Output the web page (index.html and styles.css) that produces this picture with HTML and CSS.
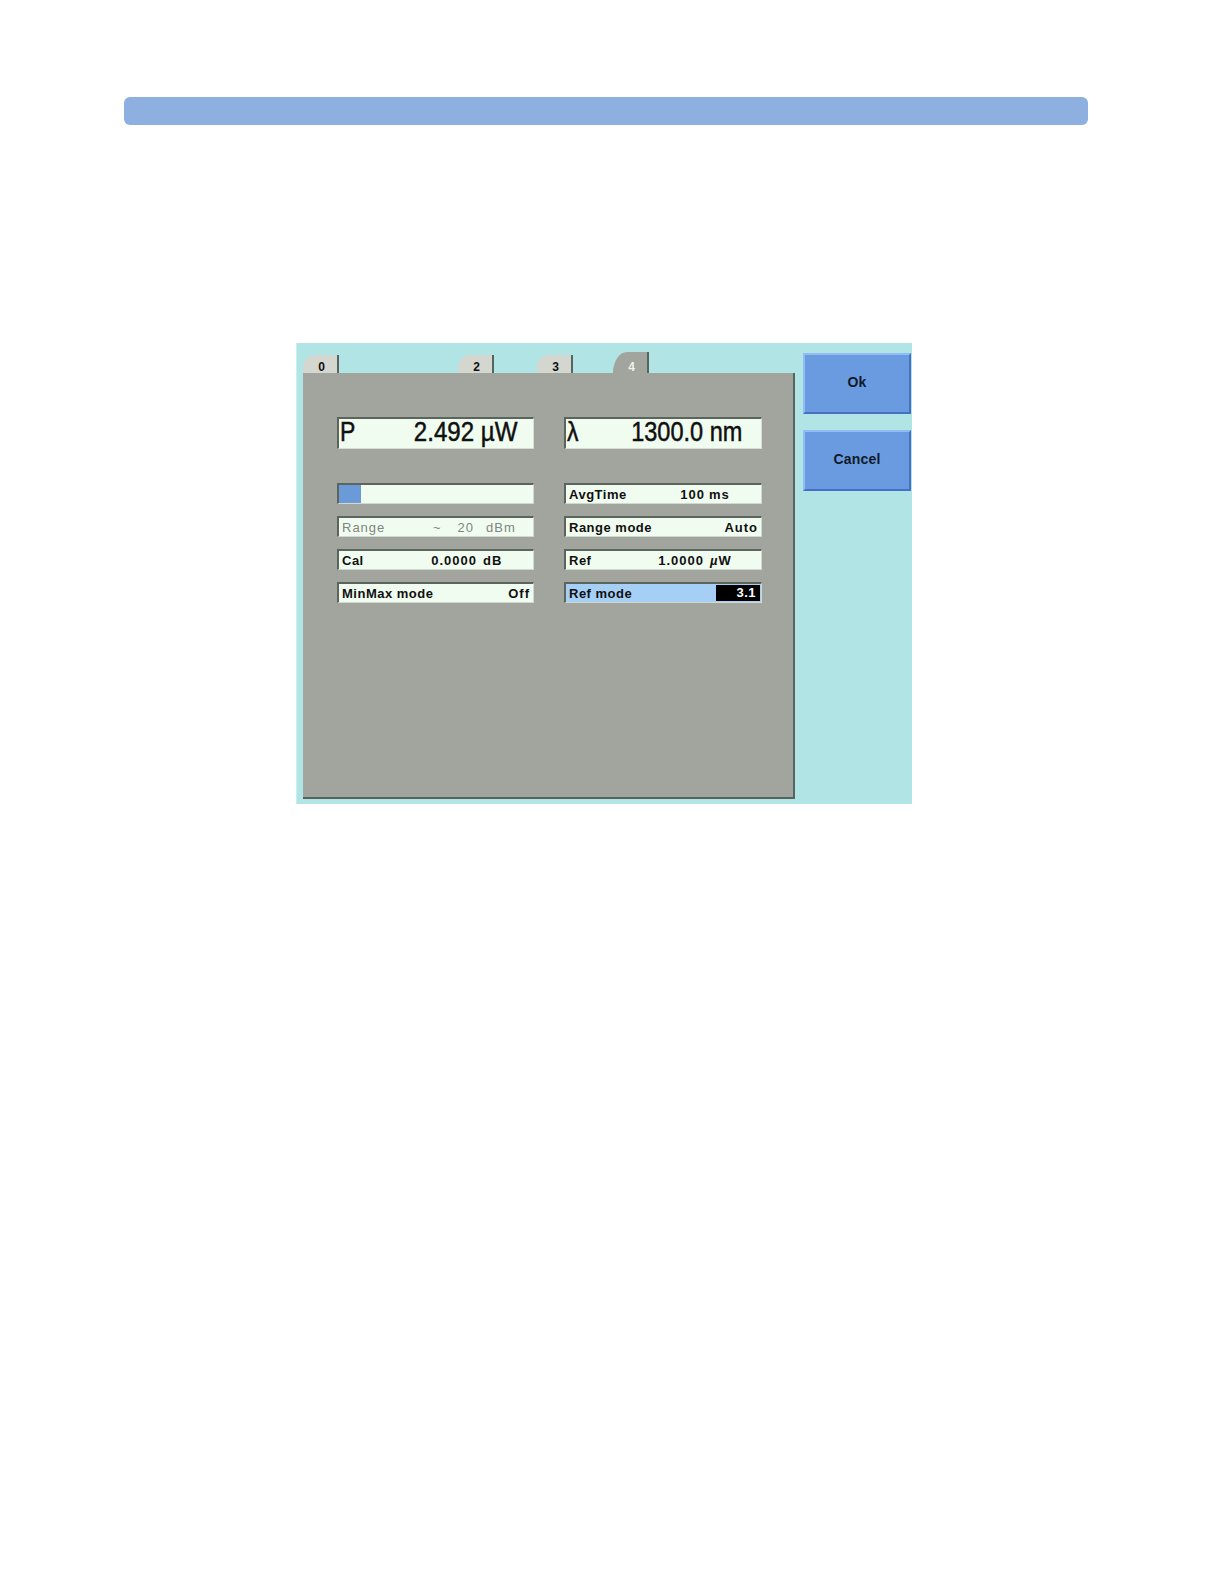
FILE: index.html
```html
<!DOCTYPE html>
<html lang="en">
<head>
<meta charset="utf-8">
<title>Power meter settings</title>
<link rel="stylesheet" href="styles.css">
</head>
<body>
<div class="topbar"></div>

<div class="screen">
  <div class="left">
    <div class="tabs">
      <div class="tab">0</div>
      <div class="tab tab-2">2</div>
      <div class="tab tab-3">3</div>
      <div class="tab tab-4 active">4</div>
    </div>
    <div class="panel">
      <div class="big-row">
        <div class="big-field">
          <span class="big-label">P</span>
          <span class="big-value">2.492 µW</span>
        </div>
        <div class="big-field">
          <span class="big-label">λ</span>
          <span class="big-value big-value-nm">1300.0 nm</span>
        </div>
      </div>
      <div class="small-grid">
        <div class="field bar-field"><div class="bar-fill"></div></div>
        <div class="field">
          <span class="label">AvgTime</span>
          <span class="val">100</span>
          <span class="unit unit-tight">ms</span>
        </div>

        <div class="field disabled">
          <span class="label">Range</span>
          <span class="val"><span class="tilde">~</span>20</span>
          <span class="unit unit-wide">dBm</span>
        </div>
        <div class="field">
          <span class="label">Range mode</span>
          <span class="val">Auto</span>
        </div>

        <div class="field">
          <span class="label">Cal</span>
          <span class="val">0.0000</span>
          <span class="unit">dB</span>
        </div>
        <div class="field">
          <span class="label">Ref</span>
          <span class="val">1.0000</span>
          <span class="unit unit-mu"><i class="mu">µ</i>W</span>
        </div>

        <div class="field">
          <span class="label">MinMax mode</span>
          <span class="val">Off</span>
        </div>
        <div class="field selected">
          <span class="label">Ref mode</span>
          <span class="valbox">3.1</span>
        </div>
      </div>
    </div>
  </div>
  <div class="buttons">
    <div class="btn">Ok</div>
    <div class="btn">Cancel</div>
  </div>
</div>
</body>
</html>
```

FILE: styles.css
```css
html, body {
  margin: 0;
  padding: 0;
  background: #ffffff;
}

body {
  width: 1222px;
  height: 1582px;
  font-family: "Liberation Sans", Arial, sans-serif;
  color: #101010;
  overflow: hidden;
}

.topbar {
  margin: 97px 0 0 124px;
  width: 964px;
  height: 28px;
  background: #8db0e0;
  border-radius: 6px;
}

.screen {
  margin: 218px 0 0 296px;
  width: 616px;
  height: 461px;
  background: #b1e4e4;
  display: flex;
  box-sizing: border-box;
  border-left: 1px solid #c8f0ee;
}

.left {
  display: flex;
  flex-direction: column;
  padding-left: 6px;
}

.tabs {
  height: 30px;
  display: flex;
  align-items: flex-end;
}

.tab {
  width: 36px;
  height: 18px;
  box-sizing: border-box;
  background: #d3d7cf;
  border-right: 2px solid #56665e;
  border-top-left-radius: 12px;
  text-align: center;
  font-size: 12px;
  font-weight: bold;
  line-height: 12px;
  padding-top: 6px;
  padding-left: 3px;
}

.tab-2 { margin-left: 119px; }
.tab-3 { margin-left: 43px; }
.tab-4 { margin-left: 40px; }

.tab.active {
  height: 21px;
  background: #a1a59d;
  color: #eef2ee;
  border-top-left-radius: 14px 21px;
  padding-top: 9px;
}

.panel {
  width: 492px;
  height: 426px;
  box-sizing: border-box;
  background: #a1a59d;
  border-right: 2px solid #56665e;
  border-bottom: 2px solid #56665e;
  padding: 44px 0 0 34px;
}

.big-row {
  display: grid;
  grid-template-columns: 197px 198px;
  column-gap: 30px;
}

.big-field {
  height: 32px;
  box-sizing: border-box;
  background: #f1fcf1;
  border-style: solid;
  border-width: 2px 1px 1px 2px;
  border-color: #5c645e #d6ddd6 #d6ddd6 #5c645e;
  display: flex;
  align-items: center;
  justify-content: space-between;
  padding: 0 16px 3px 1px;
  font-size: 28px;
  line-height: 28px;
  -webkit-text-stroke: 0.5px #101010;
}

.big-label {
  display: inline-block;
  transform: scaleX(0.82);
  transform-origin: left center;
}

.big-value {
  display: inline-block;
  transform: scaleX(0.86);
  transform-origin: right center;
  white-space: nowrap;
}

.big-value-nm {
  margin-right: 3px;
  transform: scaleX(0.84);
}

.small-grid {
  margin-top: 34px;
  display: grid;
  grid-template-columns: 197px 198px;
  grid-auto-rows: 21px;
  column-gap: 30px;
  row-gap: 12px;
}

.field {
  box-sizing: border-box;
  height: 21px;
  background: #f1fcf1;
  border-style: solid;
  border-width: 2px 1px 1px 2px;
  border-color: #5c645e #d0d8d0 #d0d8d0 #5c645e;
  display: flex;
  align-items: center;
  padding: 0 3px 0 3px;
  font-size: 13px;
  font-weight: bold;
  letter-spacing: 0.5px;
  line-height: 17px;
  white-space: nowrap;
}

.label {
  flex: 1;
}

.val {
  letter-spacing: 1px;
}

.unit {
  width: 47px;
  margin-left: 6px;
  letter-spacing: 1px;
}

.unit-tight {
  margin-left: 4px;
  width: 49px;
}

.unit-wide {
  margin-left: 12px;
  width: 44px;
}

.unit-mu {
  width: 48px;
}

.mu {
  font-style: italic;
}

.disabled {
  color: #80847e;
  font-weight: normal;
  letter-spacing: 1px;
}

.tilde {
  margin-right: 16px;
}

.bar-field {
  padding: 0;
  align-items: stretch;
}

.bar-fill {
  width: 22px;
  background: #6b9ad8;
}

.selected {
  background: #a6cff6;
  padding-right: 1px;
}

.valbox {
  width: 44px;
  height: 16px;
  box-sizing: border-box;
  background: #000000;
  color: #ffffff;
  text-align: right;
  padding-right: 4px;
  line-height: 16px;
}

.buttons {
  margin-left: 8px;
  padding-top: 10px;
  display: flex;
  flex-direction: column;
  gap: 16px;
}

.btn {
  width: 108px;
  height: 61px;
  box-sizing: border-box;
  background: #6a9be0;
  border-style: solid;
  border-width: 2px;
  border-color: #92bdf4 #4570c6 #4570c6 #92bdf4;
  display: flex;
  align-items: center;
  justify-content: center;
  padding-bottom: 3px;
  font-size: 14px;
  font-weight: bold;
  letter-spacing: 0.2px;
  color: #0e1a2a;
}
```
